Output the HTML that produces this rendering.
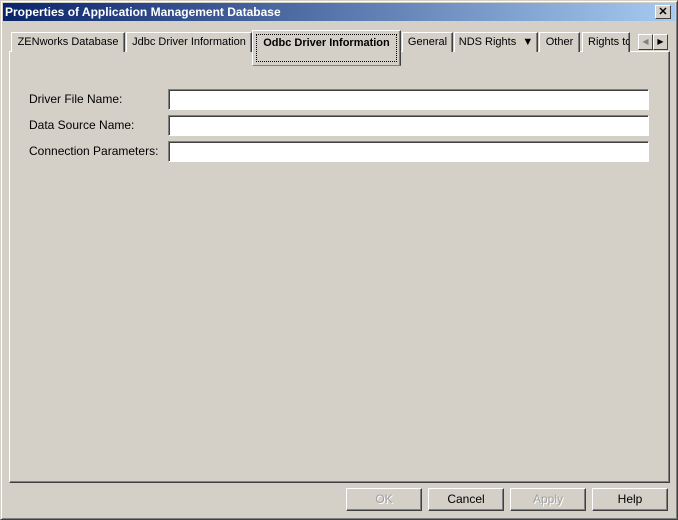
<!DOCTYPE html><html><head><style>
*{margin:0;padding:0;box-sizing:border-box}
body{width:678px;height:520px;background:#d4d0c8;font-family:"Liberation Sans",sans-serif;font-size:11px;position:relative;overflow:hidden}
.win{position:absolute;left:0;top:0;width:678px;height:520px;border:1px solid;border-color:#d4d0c8 #404040 #404040 #d4d0c8;box-shadow:inset 1px 1px #fff,inset -1px -1px #808080}
.title{position:absolute;left:3px;top:3px;width:672px;height:18px;background:linear-gradient(90deg,#0a246a,#a6caf0);color:#fff;font-weight:bold;font-size:12px;line-height:18px;padding-left:2px}
.x{position:absolute;right:4px;top:2px;width:16px;height:14px;background:#d4d0c8;border:1px solid;border-color:#fff #404040 #404040 #fff;color:#000;font-size:11px;line-height:12px;text-align:center;font-weight:bold}
.panel{position:absolute;left:9px;top:51px;width:661px;height:432px;border:1px solid;border-color:#fff #404040 #404040 #fff;box-shadow:inset -1px -1px #808080}
.tab{position:absolute;top:32px;height:20px;border:1px solid;border-bottom:none;border-color:#fff #404040 #404040 #fff;box-shadow:inset -1px 0 #808080;background:#d4d0c8;line-height:19px;text-align:center;color:#000}
.sel{top:30px;height:36px;font-weight:bold;z-index:2;border-bottom:1px solid #808080}
.sel span{display:block;margin:3px 3px;border:1px dotted #000;height:28px;line-height:15px;padding-top:1px}
.lab{position:absolute;left:29px;font-size:12px}
.inp{position:absolute;left:168px;width:481px;height:21px;background:#fff;border:1px solid;border-color:#808080 #fff #fff #808080;box-shadow:inset 1px 1px #404040}
.btn{position:absolute;top:488px;width:76px;height:23px;border:1px solid;border-color:#fff #404040 #404040 #fff;box-shadow:inset -1px -1px #808080;text-align:center;line-height:21px;font-size:12px}
.dis{color:#a0a0a0;text-shadow:1px 1px #fff}
.arr{position:absolute;top:34px;width:15px;height:16px;border:1px solid;border-color:#fff #404040 #404040 #fff;font-size:8px;text-align:center;line-height:14px;background:#d4d0c8}
</style></head><body>
<div class="win"></div>
<div class="title">Properties of Application Management Database<div class="x">✕</div></div>
<div class="panel"></div>
<div class="tab" style="left:11px;width:114px">ZENworks Database</div>
<div class="tab" style="left:126px;width:126px">Jdbc Driver Information</div>
<div class="tab sel" style="left:252px;width:149px"><span>Odbc Driver Information</span></div>
<div class="tab" style="left:402px;width:51px">General</div>
<div class="tab" style="left:454px;width:84px">NDS Rights &nbsp;▼</div>
<div class="tab" style="left:539px;width:41px">Other</div>
<div class="tab" style="left:582px;width:48px;text-align:left;padding-left:5px;overflow:hidden;white-space:nowrap">Rights to</div>
<div class="arr" style="left:638px;color:#808080">◀</div>
<div class="arr" style="left:653px">▶</div>
<div class="lab" style="top:92px">Driver File Name:</div>
<div class="lab" style="top:118px">Data Source Name:</div>
<div class="lab" style="top:144px">Connection Parameters:</div>
<div class="inp" style="top:89px"></div>
<div class="inp" style="top:115px"></div>
<div class="inp" style="top:141px"></div>
<div class="btn dis" style="left:346px">OK</div>
<div class="btn" style="left:428px">Cancel</div>
<div class="btn dis" style="left:510px">Apply</div>
<div class="btn" style="left:592px">Help</div>
</body></html>
